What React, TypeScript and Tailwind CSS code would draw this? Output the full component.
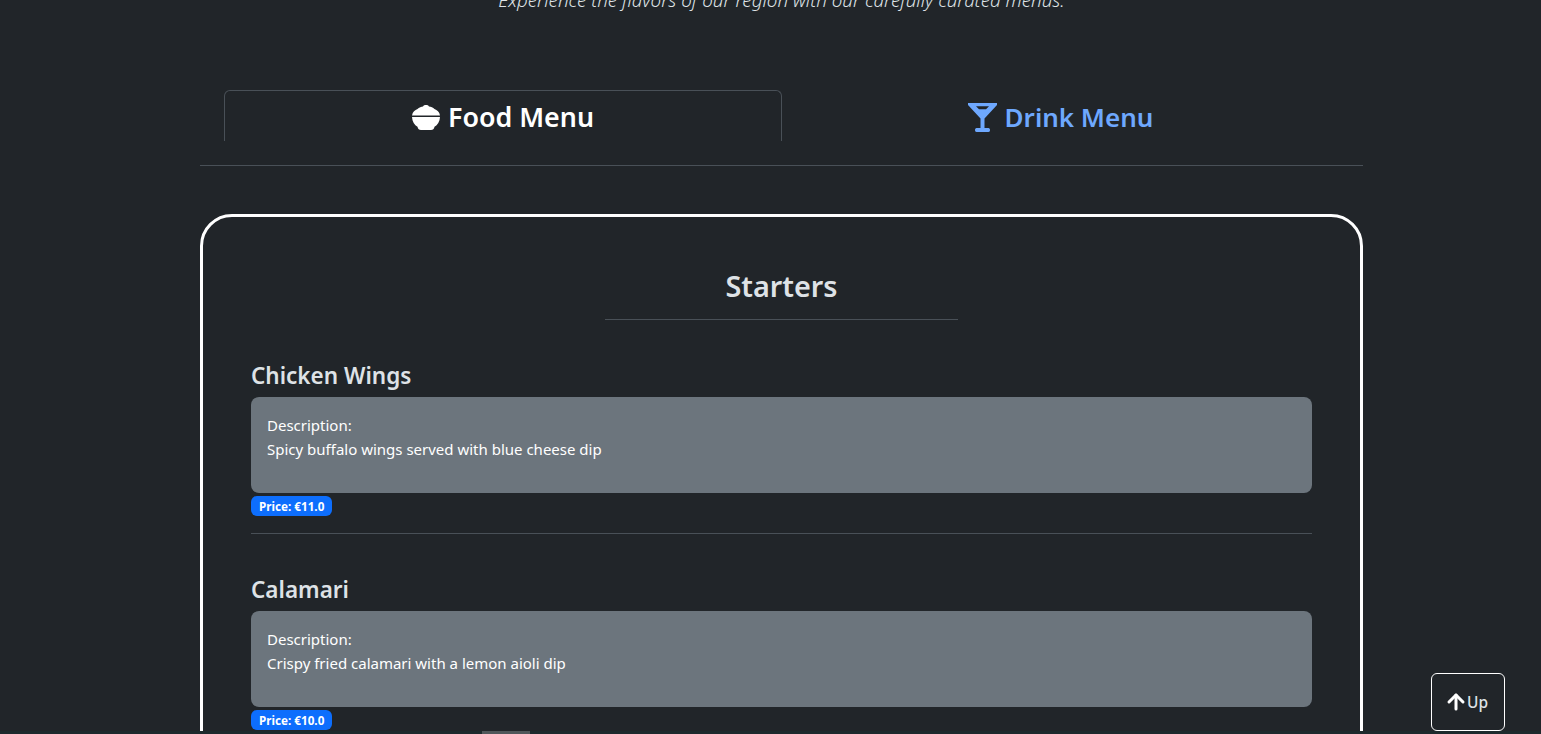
import { ArrowUp } from "lucide-react";

const starters = [
  { name: "Chicken Wings", description: "Spicy buffalo wings served with blue cheese dip", price: "11.0" },
  { name: "Calamari", description: "Crispy fried calamari with a lemon aioli dip", price: "10.0" },
];

function BowlIcon() {
  return (
    <svg className="-mt-px" width="28" height="26" viewBox="0 0 28 26" fill="currentColor" aria-hidden="true">
      <path d="M0 11.4C0.5 8 3 6 5.5 5C7 3.3 9.5 2.6 11 2.4C12 0.6 16 0.6 17 2.4C19 2.6 21 3.3 22.5 5C25 6 27.5 8 28 11.4Z" />
      <path d="M0 13H28C27.8 17.5 25.5 21 22.5 22.8C22 25 21 26 19 26H9C7 26 6 25 5.5 22.8C2.5 21 0.2 17.5 0 13Z" />
    </svg>
  );
}

function MartiniIcon() {
  return (
    <svg width="29" height="29" viewBox="0 0 29 29" fill="currentColor" aria-hidden="true">
      <path
        fillRule="evenodd"
        d="M0 0H29V2L16.5 15.5V25H20.5C21.5 25 22 26 22 27C22 28 21.5 29 20.5 29H8.5C7.5 29 7 28 7 27C7 26 7.5 25 8.5 25H12.5V15.5L0 2ZM8 3.2H21L18 6.3H11Z"
      />
    </svg>
  );
}

function MenuItem({ name, description, price, last }: { name: string; description: string; price: string; last: boolean }) {
  return (
    <div className={last ? "" : "mb-10 border-b border-[#495057] pb-4"}>
      <h4 className="mb-[7px] pt-[2px] text-[22.5px] font-semibold leading-[28px] text-[#dee2e6]">{name}</h4>
      <div className="h-24 rounded-lg bg-[#6c757d] p-4 text-[15px] leading-6 text-white">
        <p>Description:</p>
        <p>{description}</p>
      </div>
      <span className="mt-[3px] inline-block rounded-md bg-[#0d6efd] px-2 py-1 align-top text-[11.7px] font-bold leading-3 text-white">
        Price: €{price}
      </span>
    </div>
  );
}

export default function App() {
  return (
    <div className="relative h-[734px] overflow-hidden bg-[#212529] font-['Noto_Sans','Open_Sans',sans-serif] text-[#dee2e6]">
      <div className="ml-[200px] w-[1163px]">
        <p className="mt-[-13px] h-[103px] text-center text-[18.8px] font-light italic leading-[27px]">
          Experience the flavors of our region with our carefully curated menus.
        </p>

        <nav className="flex border-b border-[#495057] px-6 pb-6">
          <a className="flex h-[51px] w-[558px] flex-none items-center justify-center gap-2 rounded-t-md border border-b-0 border-[#495057] pt-[2px] text-[26.8px] font-semibold text-white">
            <BowlIcon />
            Food Menu
          </a>
          <a className="flex h-[51px] flex-1 items-center justify-center gap-2 pt-[4px] text-[26px] font-semibold text-[#6ea8fe]">
            <MartiniIcon />
            Drink Menu
          </a>
        </nav>

        <section className="mt-12 h-[560px] rounded-[32px] border-[3px] border-white px-12 pt-12">
          <h3 className="mx-auto w-[353px] border-b border-[#495057] pb-[14px] pt-[2px] text-center text-[28.8px] font-semibold leading-[38px]">
            Starters
          </h3>
          <div className="mt-10">
            {starters.map((item, i) => (
              <MenuItem key={item.name} {...item} last={i === starters.length - 1} />
            ))}
          </div>
        </section>
      </div>

      <button className="absolute right-9 top-[673px] flex h-[58px] w-[74px] items-center justify-center rounded-md border border-white pr-[3px] text-[15.5px] font-medium text-[#dee2e6]">
        <ArrowUp size={24} strokeWidth={3} className="-ml-px text-white" />
        <span className="-ml-px pt-[2px]">Up</span>
      </button>

      {/* strip along the bottom edge, something else peeks through here */}
      <div className="absolute inset-x-0 bottom-0 h-[3px] bg-[#1d2a2d]">
        <div className="ml-[482px] h-full w-12 bg-[#50575a]" />
      </div>
    </div>
  );
}
